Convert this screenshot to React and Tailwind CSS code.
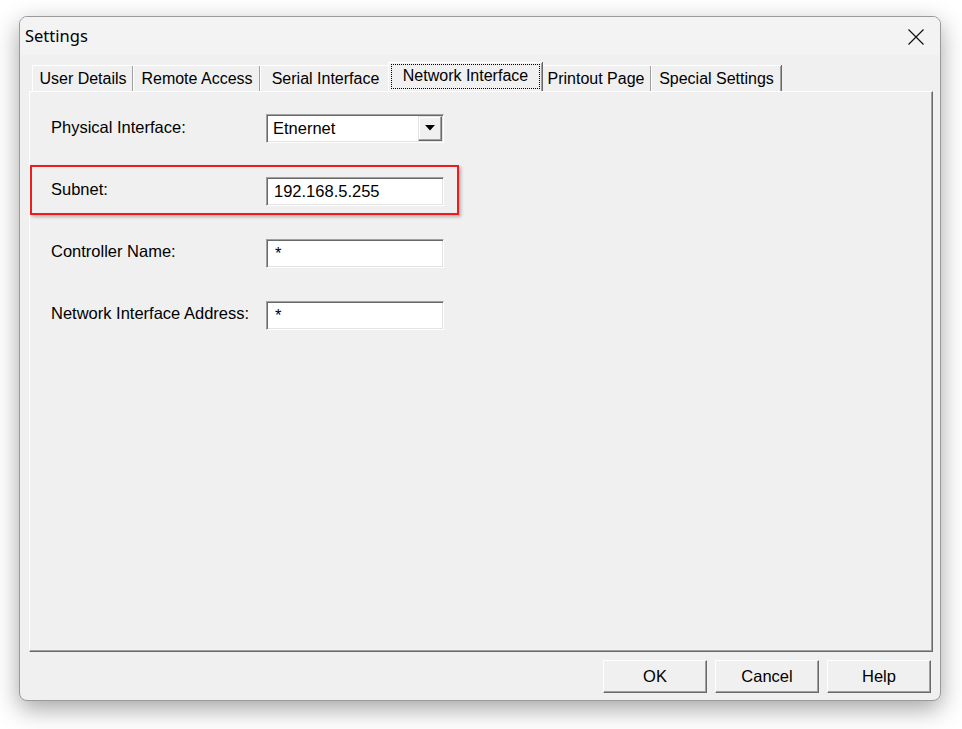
import React from 'react';

const font = { fontFamily: '"Liberation Sans", Arial, sans-serif' };

const tabs = [
  { label: 'User Details', w: 'w-[101px]' },
  { label: 'Remote Access', w: 'w-[127px]' },
  { label: 'Serial Interface', w: 'w-[130px]' },
  { label: 'Network Interface', w: 'w-[154px]', active: true },
  { label: 'Printout Page', w: 'w-[111px]' },
  { label: 'Special Settings', w: 'w-[130px]' },
];

const Tab = ({ label, w, active }) => {
  if (active) {
    return (
      <div className={`${w} h-[29px] -mx-[2px] relative z-10 bg-[#f0f0f0] border-t border-l border-white shadow-[inset_-1px_0_0_#a0a0a0,1px_0_0_#696969] flex items-start justify-center pt-[1px] px-[2px]`}>
        <div className="w-full h-[25px] border border-dotted border-black flex items-center justify-center text-[16px] text-black leading-none pb-[2px] whitespace-nowrap">
          {label}
        </div>
      </div>
    );
  }
  return (
    <div className={`${w} h-[26px] bg-[#f0f0f0] border-t border-l border-white shadow-[inset_-1px_0_0_#a0a0a0,1px_0_0_#696969] flex items-center justify-center text-[16px] text-black leading-none pt-[1px] whitespace-nowrap`}>
      {label}
    </div>
  );
};

const Sunken = ({ children, className = '' }) => (
  <div className={`w-[178px] h-[29px] bg-white border-t border-l border-[#a0a0a0] border-r border-b border-r-white border-b-white shadow-[inset_1px_1px_0_#696969,inset_-1px_-1px_0_#e3e3e3] flex items-center ${className}`}>
    {children}
  </div>
);

const Field = ({ label, children, highlight }) => (
  <div className={`w-[429px] h-[50px] flex items-center pl-[21px] ${highlight ? 'shadow-[inset_0_0_0_2px_#ee1c1c,2px_2px_3px_rgba(0,0,0,0.25)]' : ''}`}>
    <div className="w-[215px] text-[16.5px] text-black -mt-[2px]">{label}</div>
    {children}
  </div>
);

const Button = ({ children }) => (
  <button className="w-[104px] h-[33px] bg-[#f0f0f0] border-t border-l border-white border-r border-b border-r-[#696969] border-b-[#696969] shadow-[inset_-1px_-1px_0_#a0a0a0] text-[16.5px] text-black flex items-center justify-center" style={font}>
    {children}
  </button>
);

export default function App() {
  return (
    <div className="w-[962px] h-[729px] bg-white pt-[16px] pl-[19px] overflow-hidden" style={font}>
      <div className="w-[922px] h-[685px] rounded-[8px] border border-[#9a9a9a] bg-[#f0f0f0] shadow-[0_8px_24px_rgba(0,0,0,0.36)] flex flex-col overflow-hidden">
        {/* Title bar */}
        <div className="h-[38px] bg-[#f3f3f3] flex items-center justify-between pl-[5px] pr-[16px] shrink-0">
          <span className="text-[16.5px] text-black" style={{ fontFamily: '"Noto Sans", "Open Sans", sans-serif' }}>Settings</span>
          <svg width="16" height="16" viewBox="0 0 16 16" className="mt-[1px]">
            <path d="M0.5 0.5 L15.5 15.5 M15.5 0.5 L0.5 15.5" stroke="#111" strokeWidth="1.2" fill="none" />
          </svg>
        </div>

        {/* Body */}
        <div className="flex-1 flex flex-col px-[9px] pt-[8px]">
          <div className="flex items-end pl-[3px] h-[28px]">
            {tabs.map(t => <Tab key={t.label} {...t} />)}
          </div>

          <div className="w-[904px] h-[561px] border-t border-l border-white border-r border-b border-r-[#696969] border-b-[#696969] shadow-[inset_-1px_-1px_0_#a0a0a0] pt-[11px] flex flex-col gap-[12px]">
            <Field label="Physical Interface:">
              <Sunken className="justify-between pl-[6px] pr-[1px]">
                <span className="text-[16.5px] text-black">Etnernet</span>
                <div className="w-[24px] h-[25px] bg-[#f0f0f0] border-t border-l border-[#e3e3e3] border-r border-b border-r-[#696969] border-b-[#696969] shadow-[inset_-1px_-1px_0_#a0a0a0,inset_1px_1px_0_#fff] flex items-center justify-center">
                  <svg width="10" height="6" viewBox="0 0 10 6">
                    <path d="M0 0 H10 L5 5.5 Z" fill="#000" />
                  </svg>
                </div>
              </Sunken>
            </Field>

            <Field label="Subnet:" highlight>
              <Sunken className="pl-[7px] mt-[3px]">
                <span className="text-[16.5px] text-black">192.168.5.255</span>
              </Sunken>
            </Field>

            <Field label="Controller Name:">
              <Sunken className="pl-[8px] mt-[3px]">
                <span className="text-[16.5px] text-black leading-none">*</span>
              </Sunken>
            </Field>

            <Field label="Network Interface Address:">
              <Sunken className="pl-[8px] mt-[3px]">
                <span className="text-[16.5px] text-black leading-none">*</span>
              </Sunken>
            </Field>
          </div>

          <div className="flex justify-end gap-[8px] pt-[8px]">
            <Button>OK</Button>
            <Button>Cancel</Button>
            <Button>Help</Button>
          </div>
        </div>
      </div>
    </div>
  );
}
